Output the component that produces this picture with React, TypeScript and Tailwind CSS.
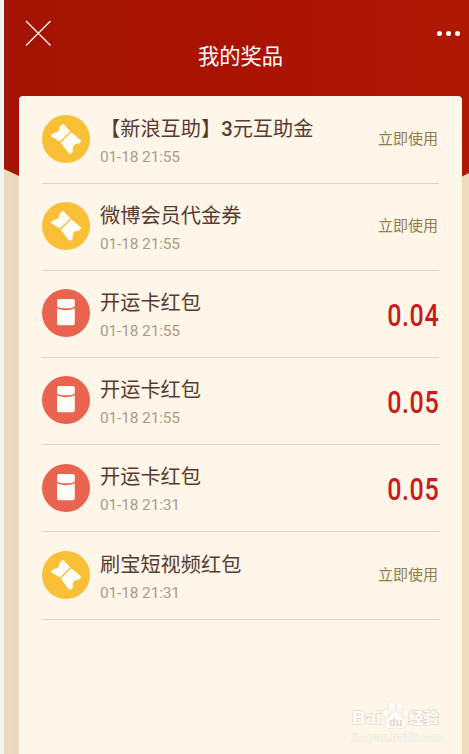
import { clsx } from "clsx";

interface Prize {
  title: string;
  time: string;
  kind: "coupon" | "packet";
  amount?: string;
}

const prizes: Prize[] = [
  { title: "【新浪互助】3元互助金", time: "01-18 21:55", kind: "coupon" },
  { title: "微博会员代金券", time: "01-18 21:55", kind: "coupon" },
  { title: "开运卡红包", time: "01-18 21:55", kind: "packet", amount: "0.04" },
  { title: "开运卡红包", time: "01-18 21:55", kind: "packet", amount: "0.05" },
  { title: "开运卡红包", time: "01-18 21:31", kind: "packet", amount: "0.05" },
  { title: "刷宝短视频红包", time: "01-18 21:31", kind: "coupon" },
];

export default function App() {
  return (
    <div className="flex h-[754px] w-[469px] overflow-hidden bg-[#f3f3f3] pl-1 font-['Roboto','Noto_Sans_CJK_SC',sans-serif]">
      <div className="relative flex min-w-0 flex-1 flex-col bg-[#ecdabd]">
        <Backdrop />

        <header className="relative h-24 text-white">
          <button aria-label="关闭" className="absolute left-[21px] top-5">
            <CloseIcon />
          </button>
          <h1 className="pl-[8px] pt-[41px] text-center text-[21.3px] font-normal leading-[31px]">我的奖品</h1>
          <button aria-label="更多" className="absolute right-[9px] top-[31px] flex gap-1">
            <i className="size-[5px] rounded-full bg-white" />
            <i className="size-[5px] rounded-full bg-white" />
            <i className="size-[5px] rounded-full bg-white" />
          </button>
        </header>

        {/* Prize list */}
        <main className="relative ml-[15px] mr-[7px] flex-1 rounded-t-[4px] bg-[#fef6e8] pl-[23px] pr-[23px] pt-[0.5px]">
          <ul>
            {prizes.map((prize, i) => (
              <PrizeRow key={i} prize={prize} />
            ))}
          </ul>
          <Watermark />
        </main>
      </div>
    </div>
  );
}

function PrizeRow({ prize }: { prize: Prize }) {
  const coupon = prize.kind === "coupon";

  return (
    <li className="flex h-[87.2px] items-center border-b border-[#dbd5c8]">
      <div
        className={clsx(
          "mb-[1.4px] size-12 shrink-0 rounded-full",
          coupon ? "bg-[#f8bf37]" : "bg-[#e9644e]",
        )}
      >
        {coupon ? <CouponIcon /> : <PacketIcon />}
      </div>
      <div className="ml-[10px] flex-1 whitespace-nowrap pt-[4px]">
        <p className="text-[20.2px] leading-7 text-[#5a3a30]">
          <Title text={prize.title} />
        </p>
        <p className="mt-0.5 text-[15.5px] font-normal leading-6 tracking-[-0.15px] text-[#a89c88]">{prize.time}</p>
      </div>
      {prize.amount ? (
        <span className="origin-right scale-x-[0.81] pt-[4px] text-[31px] font-medium leading-9 tracking-[0.7px] text-[#cc1a1c]">
          {prize.amount}
        </span>
      ) : (
        <button className="mr-px pb-px text-[15px] font-normal leading-6 text-[#937a4a]">立即使用</button>
      )}
    </li>
  );
}

// Digits keep the medium weight, the Chinese characters are set regular
function Title({ text }: { text: string }) {
  return text.split(/(\d+)/).map((part, i) => (
    <span key={i} className={i % 2 === 1 ? "font-medium" : "font-normal"}>
      {part}
    </span>
  ));
}

function Backdrop() {
  return (
    <svg className="absolute inset-0" width="465" height="754" fill="none">
      <defs>
        <linearGradient id="red" x1="0" y1="0" x2="1" y2="0">
          <stop offset="0" stopColor="#a41303" />
          <stop offset="0.6" stopColor="#aa1401" />
          <stop offset="1" stopColor="#b01804" />
        </linearGradient>
      </defs>
      <path d="M7.500 160H15V754H7.500z" fill="#eed7bf" />
      <path d="M0 0H465V173L458 176.500L232 290L15 176L0 169z" fill="url(#red)" />
    </svg>
  );
}

function CloseIcon() {
  return (
    <svg width="27" height="27" viewBox="0 0 27 27" stroke="currentColor" strokeWidth="1.300">
      <path d="M1 1L25.500 25.500M25.500 1L1 25.500" />
    </svg>
  );
}

function CouponIcon() {
  return (
    <svg width="48" height="48" viewBox="0 0 48 48" fill="#fffdf8" stroke="#fffdf8" strokeWidth="0.600" strokeLinejoin="round">
      <path d="M8.800 20.800L12 18Q14.500 18.300 16.300 16.600Q18.200 14.500 17.500 12L21 8.900L28 16.300L17.800 26.200z" />
      <path d="M29.300 17.600L39 25.700L37.200 28.300Q34.500 27.800 32.300 29.700Q29.800 32 30.600 35.300L30.300 37.300L27.500 38.800L19 27.700z" />
    </svg>
  );
}

function PacketIcon() {
  return (
    <svg width="48" height="48" viewBox="0 0 48 48" fill="#fffdf8">
      <path d="M17 10H30.800Q32.800 10 32.800 12V16.500Q32.800 18 31 18.400Q24 20.300 16.800 18.400Q15 18 15 16.500V12Q15 10 17 10z" />
      <path d="M15 19.200Q24 23.300 32.800 19.200V34.300Q32.800 36.300 30.800 36.300H17Q15 36.300 15 34.300z" />
    </svg>
  );
}

function Watermark() {
  return (
    <div className="absolute left-[333px] top-[602px] w-[90px] font-['Liberation_Sans','Noto_Sans_CJK_SC',sans-serif] text-[#fffefb] [-webkit-text-stroke:1.6px_#e2dbcd] [paint-order:stroke_fill]">
      <div className="flex h-8 items-end font-bold">
        <span className="text-[19px] leading-6">Bai</span>
        <svg className="shrink-0" width="27" height="30" viewBox="0 0 27 28" fill="#fffefb" stroke="#ddd5c7" strokeWidth="0.900">
          <ellipse cx="4" cy="12" rx="2.800" ry="3.800" />
          <ellipse cx="10" cy="5" rx="3" ry="4.200" />
          <ellipse cx="17.500" cy="5" rx="3" ry="4.200" />
          <ellipse cx="23.500" cy="12" rx="2.800" ry="3.800" />
          <path d="M13.500 11C17 11 18 15 22 18.500C26 23 23 28 18 27C15 26.500 12 26.500 9 27C4 28 1 23 5 18.500C9 15 10 11 13.500 11z" />
          <text x="7" y="24.500" fontSize="11" fill="#ddd5c7" className="[-webkit-text-stroke:0]" stroke="none">du</text>
        </svg>
        <span className="whitespace-nowrap text-[15px] leading-6">经验</span>
      </div>
      <p className="mt-px text-[11.3px] leading-3 [-webkit-text-stroke:1px_#ebe4d7]">jingyan.baidu.com</p>
    </div>
  );
}
